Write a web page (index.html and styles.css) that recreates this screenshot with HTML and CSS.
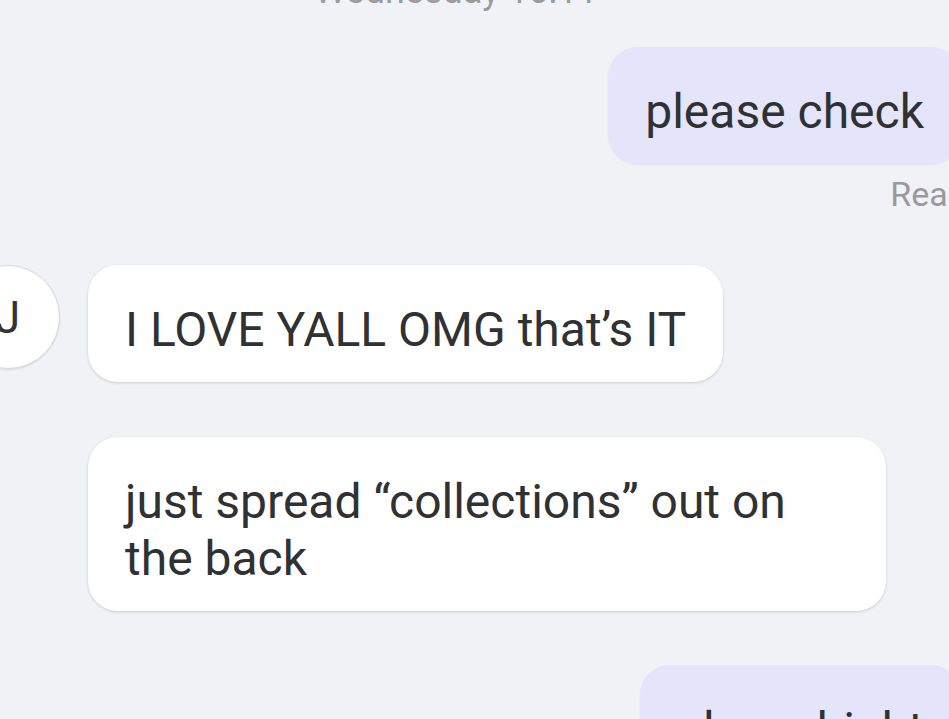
FILE: index.html
```html
<!DOCTYPE html>
<html lang="en">
<head>
    <meta charset="UTF-8">
    <meta name="viewport" content="width=device-width, initial-scale=1.0">
    <title>Messages</title>
    <link rel="stylesheet" href="styles.css">
</head>
<body>
    <div class="chat">
        <!-- Date divider -->
        <div class="timestamp">Wednesday 16:11</div>

        <!-- Outgoing -->
        <div class="row sent">
            <div class="bubble out">please check</div>
        </div>
        <div class="status">Read</div>

        <!-- Incoming group -->
        <div class="group">
            <div class="avatar">J</div>
            <div class="stack">
                <div class="bubble in">I LOVE YALL OMG that’s IT</div>
                <div class="bubble in">just spread “collections” out on the back</div>
            </div>
        </div>

        <div class="row sent last">
            <div class="bubble out">also a hight</div>
        </div>
    </div>
</body>
</html>
```

FILE: styles.css
```css
/* General */
body {
    margin: 0;
    background: #f1f2f6;
    font-family: Roboto, "Noto Sans", sans-serif;
    color: #303133;
    overflow: hidden;
}

.chat {
    margin-right: -12px;
}

/* Date divider */
.timestamp {
    margin-top: -29px;
    text-align: center;
    font-size: 36px;
    line-height: 40px;
    color: #9b9b9e;
    padding-right: 49px;
}

/* Rows */
.row {
    display: flex;
}

.row.sent {
    justify-content: flex-end;
    margin-top: 36px;
}

.row.sent.last {
    margin-top: 54px;
}

/* Bubbles */
.bubble {
    font-size: 48px;
    line-height: 57px;
    padding: 36px 37px 24px;
    border-radius: 30px;
    max-width: 724px;
}

.bubble.out {
    background: #e4e5fb;
    box-shadow: 0 1px 2px rgba(0, 0, 0, 0.06);
}

.bubble.in {
    background: #fff;
    box-shadow: 0 1px 3px rgba(0, 0, 0, 0.16);
}

.status {
    text-align: right;
    font-size: 34px;
    line-height: 40px;
    color: #9a9a9d;
    margin-top: 10px;
    margin-right: -6px;
}

/* Incoming group */
.group {
    display: flex;
    align-items: flex-start;
    gap: 28px;
    margin-top: 51px;
}

.avatar {
    flex: none;
    width: 102px;
    height: 102px;
    margin-left: -44px;
    border-radius: 50%;
    background: #fff;
    border: 1px solid #d8d9de;
    box-shadow: 0 1px 2px rgba(0, 0, 0, 0.1);
    display: flex;
    align-items: center;
    justify-content: center;
    font-size: 45px;
    color: #333;
}

.stack {
    display: flex;
    flex-direction: column;
    align-items: flex-start;
    gap: 55px;
}
```
